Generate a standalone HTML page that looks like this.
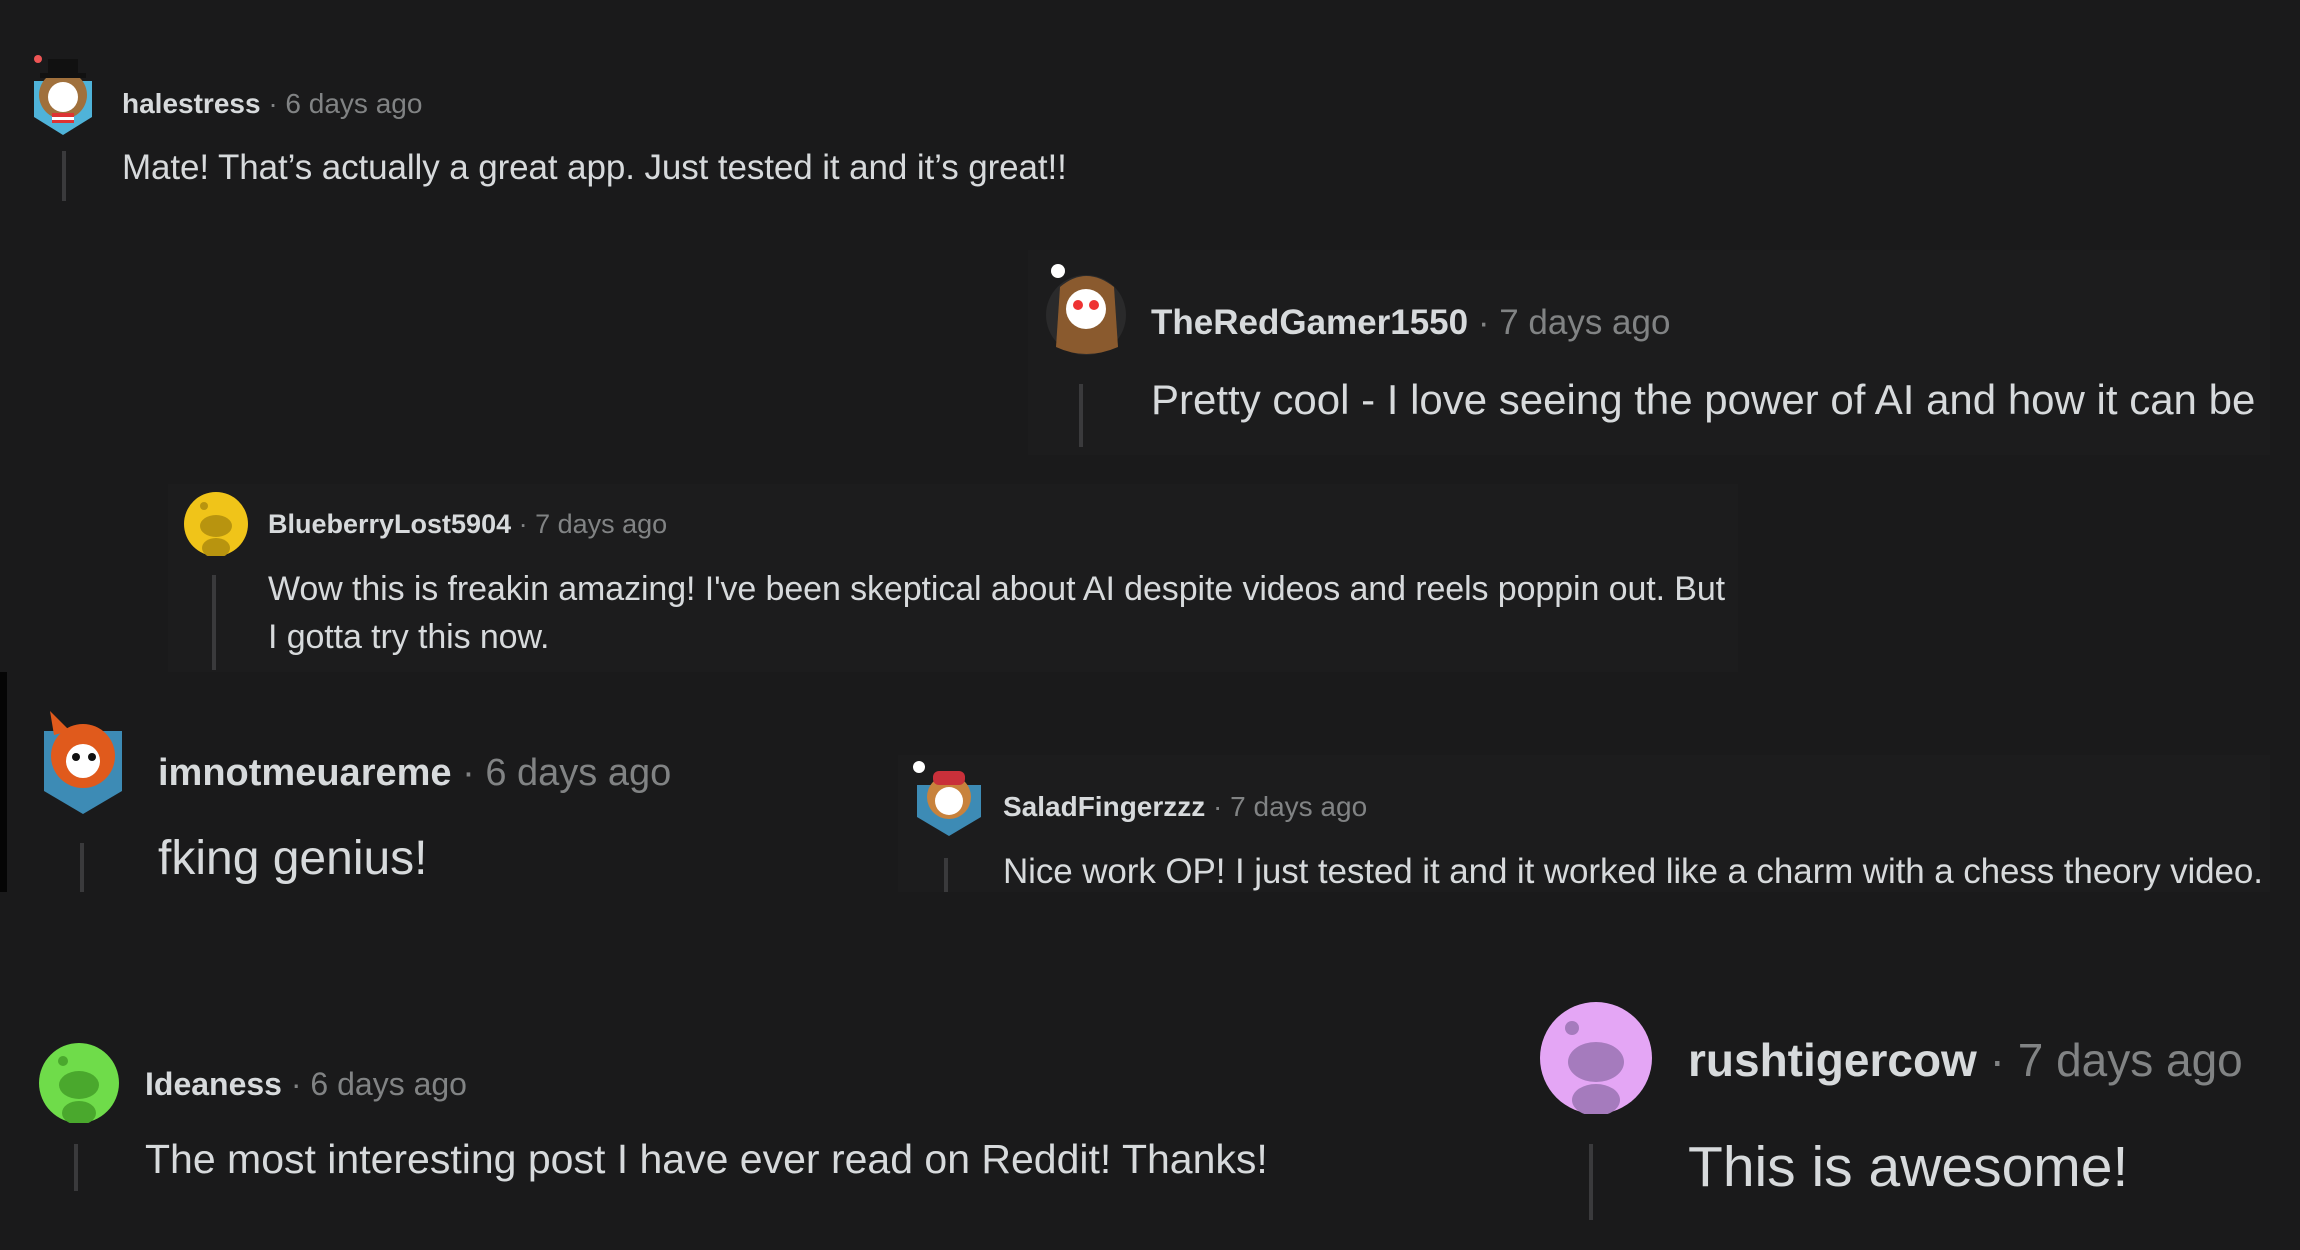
<!DOCTYPE html>
<html><head><meta charset="utf-8"><style>
html,body{margin:0;padding:0;}
body{width:2300px;height:1250px;background:#1a1a1b;position:relative;overflow:hidden;font-family:"Liberation Sans",sans-serif;color:#d7dadc;}
.a{position:absolute;}
.t{position:absolute;white-space:nowrap;line-height:1;}
.n{font-weight:bold;color:#d7dadc;}
.d{color:#818384;}
.l{position:absolute;width:4px;background:#3a3a3c;}
.box{position:absolute;background:#1c1c1d;}
</style></head><body>
<div class="a" style="left:0;top:672px;width:7px;height:220px;background:#050505"></div>
<div class="box" style="left:1028px;top:250px;width:1242px;height:205px;"></div>
<div class="box" style="left:168px;top:484px;width:1570px;height:188px;"></div>
<div class="box" style="left:898px;top:755px;width:1372px;height:137px;"></div>

<!-- halestress -->
<svg class="a" style="left:26px;top:51px" width="74" height="84" viewBox="0 0 74 84">
<path d="M8 30 L66 30 L66 66 L37 84 L8 66Z" fill="#4fb3d9"/>
<circle cx="37" cy="44" r="24" fill="#a0703c"/><circle cx="37" cy="46" r="15" fill="#fff"/>
<rect x="26" y="62" width="22" height="10" fill="#d33"/><rect x="26" y="66" width="22" height="3" fill="#fff"/>
<rect x="22" y="8" width="30" height="18" fill="#111"/><rect x="14" y="22" width="46" height="5" fill="#111"/>
<circle cx="12" cy="8" r="4" fill="#e55"/>
</svg>
<div class="t" style="left:122px;top:90px;font-size:28px"><span class="n">halestress</span><span class="d"> · 6 days ago</span></div>
<div class="l" style="left:62px;top:151px;height:50px"></div>
<div class="t" style="left:122px;top:150px;font-size:35px;letter-spacing:-0.1px">Mate! That’s actually a great app. Just tested it and it’s great!!</div>

<!-- TheRedGamer -->
<svg class="a" style="left:1044px;top:257px" width="84" height="104" viewBox="0 0 84 104">
<circle cx="42" cy="58" r="40" fill="#2a2a2b"/>
<path d="M16 30 Q42 8 70 30 L74 90 Q42 104 12 90Z" fill="#8a5a2e"/>
<circle cx="42" cy="52" r="20" fill="#fff"/><circle cx="34" cy="48" r="5" fill="#e33"/><circle cx="50" cy="48" r="5" fill="#e33"/>
<circle cx="14" cy="14" r="7" fill="#fff"/>
</svg>
<div class="t" style="left:1151px;top:305px;font-size:35px"><span class="n">TheRedGamer1550</span><span class="d"> · 7 days ago</span></div>
<div class="l" style="left:1079px;top:384px;height:63px"></div>
<div class="t" style="left:1151px;top:379px;font-size:42px;letter-spacing:0px">Pretty cool - I love seeing the power of AI and how it can be</div>

<!-- Blueberry -->
<svg class="a" style="left:184px;top:492px" width="64" height="64" viewBox="0 0 64 64">
<circle cx="32" cy="32" r="32" fill="#f0c419"/>
<ellipse cx="32" cy="34" rx="16" ry="11" fill="#b8940f"/><ellipse cx="32" cy="56" rx="14" ry="10" fill="#b8940f"/>
<circle cx="20" cy="14" r="4" fill="#b8940f"/>
</svg>
<div class="t" style="left:268px;top:511px;font-size:27px"><span class="n">BlueberryLost5904</span><span class="d"> · 7 days ago</span></div>
<div class="l" style="left:212px;top:575px;height:95px"></div>
<div class="t" style="left:268px;top:565px;font-size:34px;line-height:48px;letter-spacing:-0.1px">Wow this is freakin amazing! I've been skeptical about AI despite videos and reels poppin out. But<br>I gotta try this now.</div>

<!-- imnotmeuareme -->
<svg class="a" style="left:40px;top:701px" width="86" height="113" viewBox="0 0 86 113">
<path d="M4 30 L82 30 L82 90 L43 113 L4 90Z" fill="#3d8bb5"/>
<circle cx="43" cy="55" r="32" fill="#e05a1c"/><circle cx="43" cy="60" r="17" fill="#fff"/>
<circle cx="36" cy="56" r="4" fill="#111"/><circle cx="52" cy="56" r="4" fill="#111"/>
<path d="M10 10 L30 30 L14 34Z" fill="#e05a1c"/>
</svg>
<div class="t" style="left:158px;top:754px;font-size:38px"><span class="n">imnotmeuareme</span><span class="d"> · 6 days ago</span></div>
<div class="l" style="left:80px;top:843px;height:49px"></div>
<div class="t" style="left:158px;top:835px;font-size:48px">fking genius!</div>

<!-- Salad -->
<svg class="a" style="left:909px;top:755px" width="80" height="81" viewBox="0 0 80 81">
<path d="M8 30 L72 30 L72 62 L40 81 L8 62Z" fill="#3d8bb5"/>
<circle cx="40" cy="42" r="22" fill="#c8823c"/><circle cx="40" cy="46" r="14" fill="#fff"/>
<rect x="24" y="16" width="32" height="14" rx="6" fill="#c9303a"/><circle cx="10" cy="12" r="6" fill="#fff"/>
</svg>
<div class="t" style="left:1003px;top:793px;font-size:28px"><span class="n">SaladFingerzzz</span><span class="d"> · 7 days ago</span></div>
<div class="l" style="left:944px;top:858px;height:34px"></div>
<div class="t" style="left:1003px;top:854px;font-size:35px;letter-spacing:-0.1px">Nice work OP! I just tested it and it worked like a charm with a chess theory video.</div>

<!-- Ideaness -->
<svg class="a" style="left:39px;top:1043px" width="80" height="80" viewBox="0 0 80 80">
<circle cx="40" cy="40" r="40" fill="#6fdc4a"/>
<ellipse cx="40" cy="42" rx="20" ry="14" fill="#4aa82d"/><ellipse cx="40" cy="70" rx="17" ry="12" fill="#4aa82d"/>
<circle cx="24" cy="18" r="5" fill="#4aa82d"/>
</svg>
<div class="t" style="left:145px;top:1068px;font-size:32px"><span class="n">Ideaness</span><span class="d"> · 6 days ago</span></div>
<div class="l" style="left:74px;top:1144px;height:47px"></div>
<div class="t" style="left:145px;top:1139px;font-size:41px;letter-spacing:0px">The most interesting post I have ever read on Reddit! Thanks!</div>

<!-- rushtigercow -->
<svg class="a" style="left:1540px;top:1002px" width="112" height="112" viewBox="0 0 112 112">
<circle cx="56" cy="56" r="56" fill="#e4a6f5"/>
<ellipse cx="56" cy="60" rx="28" ry="20" fill="#a57bbd"/><ellipse cx="56" cy="98" rx="24" ry="16" fill="#a57bbd"/>
<circle cx="32" cy="26" r="7" fill="#a57bbd"/>
</svg>
<div class="t" style="left:1688px;top:1037px;font-size:46px"><span class="n">rushtigercow</span><span class="d"> · 7 days ago</span></div>
<div class="l" style="left:1589px;top:1144px;height:76px"></div>
<div class="t" style="left:1688px;top:1139px;font-size:57px">This is awesome!</div>
</body></html>
